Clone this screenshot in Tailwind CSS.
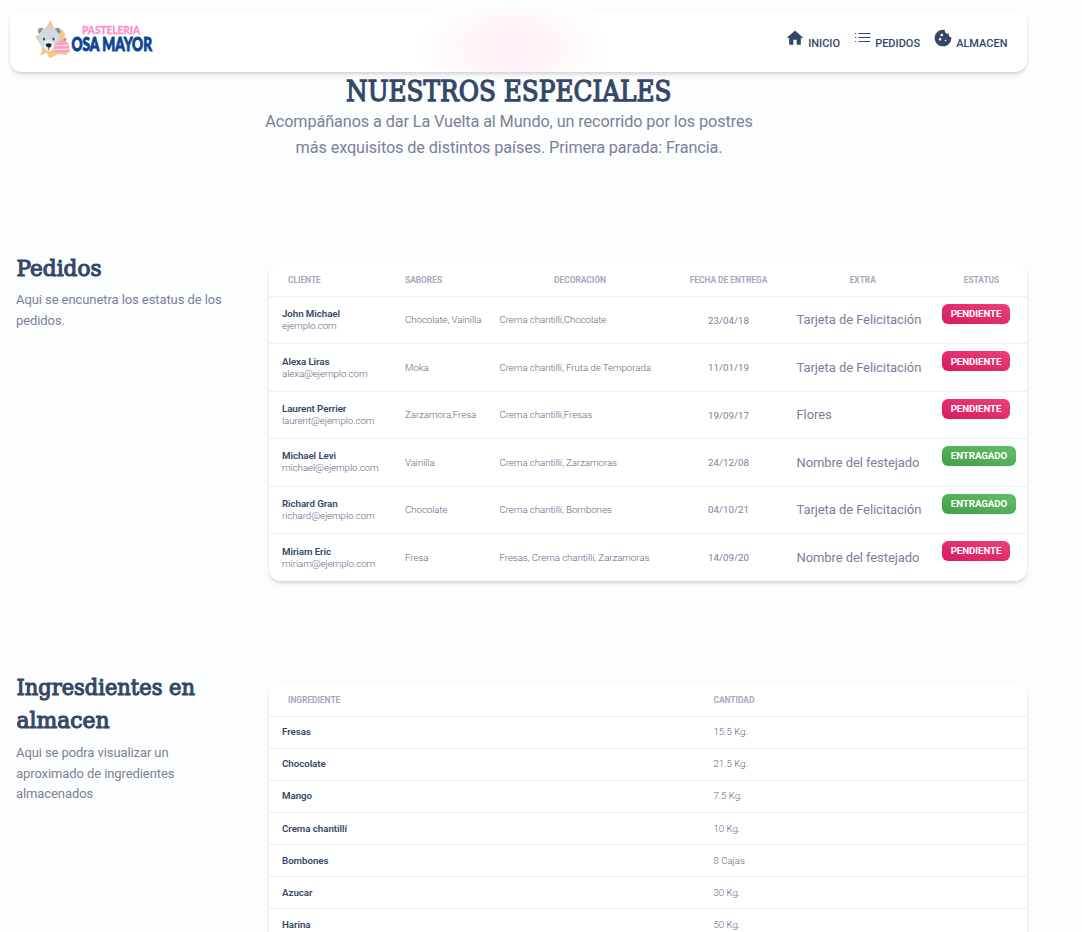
<!DOCTYPE html>
<html lang="es">
<head>
<meta charset="utf-8">
<title>Osa Mayor</title>
<script src="https://cdn.jsdelivr.net/npm/@tailwindcss/browser@4"></script>
</head>
<body class="h-[932px] overflow-hidden bg-[#fcfdfe] font-['Roboto',sans-serif] text-[#7b809a]">
<nav class="mx-[10px] mt-[10px] flex h-[62px] w-[1017px] justify-between rounded-xl bg-white bg-[radial-gradient(ellipse_98px_56px_at_503px_38px,#fff0f6_0%,#fff2f8_30%,#fffafc_65%,#ffffff_100%)] pl-[24px] pr-[19px] shadow-[0_3px_5px_-1px_rgba(0,0,0,0.16),0_1px_3px_rgba(0,0,0,0.05)]">
  <svg class="mt-[9px] h-[40px] w-[122px] overflow-visible" viewBox="34 19 122 40">
    <path d="M50.500 20l4 9.500 8 .5 3 5-3 6 5 14-9-1-9 4.500-3-6-6 3 2-9-7.500-10 7-2z" fill="#f5c58b"/>
    <circle cx="41" cy="31" r="3.200" fill="#8e9da6"/><circle cx="57.500" cy="31" r="3.200" fill="#8e9da6"/>
    <circle cx="41.300" cy="31.300" r="1.500" fill="#5f7480"/><circle cx="57.200" cy="31.300" r="1.500" fill="#5f7480"/>
    <ellipse cx="49" cy="38.500" rx="10.500" ry="11.500" fill="#cfdae0"/>
    <ellipse cx="49" cy="45.500" rx="5" ry="5.500" fill="#edf1f3"/>
    <ellipse cx="44" cy="39" rx="1" ry="1.600" fill="#35434c"/><ellipse cx="53.500" cy="39" rx="1" ry="1.600" fill="#35434c"/>
    <path d="M45.800 44q2.800-1.600 5.600 0 .4 3-2.300 3.600v2.500h-.6v-2.500q-3-.8-2.700-3.600z" fill="#182229"/>
    <path d="M54 45l9-6 6 5 .8 8.500-15 .3z" fill="#f7a3b8"/>
    <path d="M54 46l15.200-.8M54.500 49.500l15-.4" stroke="#fde0e4" stroke-width="1.200"/>
    <circle cx="65" cy="39.500" r="1.400" fill="#ec7898"/>
    <text x="82" y="34.300" textLength="58" lengthAdjust="spacingAndGlyphs" class="font-['Lato',sans-serif] text-[10.500px] font-black" fill="#fb93c9" stroke="#fb93c9" stroke-width=".3">PASTELERIA</text>
    <text x="71.500" y="50.700" textLength="80.500" lengthAdjust="spacingAndGlyphs" class="font-['Lato',sans-serif] text-[18px] font-black leading-none" fill="#0c4596" stroke="#0c4596" stroke-width=".9" stroke-linejoin="round">OSA MAYOR</text>
  </svg>
  <div class="flex pt-[18px] text-[11px] font-medium leading-[16px] text-[#344767]">
    <a class="flex w-[68px]"><svg class="mr-[3px] h-[20px] w-[20px]" viewBox="0 0 24 24" fill="currentColor"><path d="M10 20v-6h4v6h5v-8h3L12 3 2 12h3v8z"/></svg><span class="mt-[8px]">INICIO</span></a>
    <a class="flex w-[80px]"><svg class="mr-[2px] h-[20px] w-[20px]" viewBox="0 0 24 24" fill="currentColor"><path d="M2.500 6h1.300v1.300H2.500zM6.500 6h14.500v1.300h-14.500zM2.500 10.800h1.300v1.300H2.500zM6.500 10.800h14.500v1.300h-14.500zM2.500 15.600h1.300v1.300H2.500zM6.500 15.600h14.500v1.300h-14.500z"/></svg><span class="mt-[8px]">PEDIDOS</span></a>
    <a class="mr-[0.500px] flex"><svg class="mr-[3px] h-[20px] w-[20px]" viewBox="0 0 24 24" fill="currentColor"><path d="M21.950 10.990c-1.790-.03-3.700-1.950-2.680-4.220-2.980 1-5.770-1.590-5.190-4.560C6.950.71 2 6.580 2 12c0 5.520 4.480 10 10 10 5.890 0 10.540-5.080 9.950-11.010zM8.500 15c-.83 0-1.500-.67-1.500-1.500S7.670 12 8.500 12s1.500.67 1.500 1.500S9.330 15 8.500 15zm2-5C9.670 10 9 9.330 9 8.500S9.670 7 10.500 7s1.500.67 1.500 1.500-.67 1.500-1.500 1.500zm4.500 6c-.55 0-1-.45-1-1s.45-1 1-1 1 .45 1 1-.45 1-1 1z"/></svg><span class="mt-[8px]">ALMACEN</span></a>
  </div>
</nav>
<header class="w-[1017px] pt-[2px] text-center">
  <h1><svg class="mx-auto h-[35px] w-[327px] overflow-visible font-['Roboto_Slab','DejaVu_Serif',serif] text-[28px]" fill="#344767" stroke="#344767" stroke-width="1.300"><text x="1" y="26.500" textLength="325.500" lengthAdjust="spacingAndGlyphs">NUESTROS ESPECIALES</text></svg></h1>
  <p class="pl-px text-[16.250px] leading-[26px] tracking-[-0.11px]">Acompáñanos a dar La Vuelta al Mundo, un recorrido por los postres<br>más exquisitos de distintos países. Primera parada: Francia.</p>
</header>
<section class="mt-[90px] flex h-[420px]">
  <div class="w-[269px] pl-4">
    <h3><svg class="h-[33px] w-[87px] overflow-visible font-['Roboto_Slab','DejaVu_Serif',serif] text-[23px]" fill="#344767" stroke="#344767" stroke-width="1.150"><text x="0.500" y="25" textLength="85" lengthAdjust="spacingAndGlyphs">Pedidos</text></svg></h3>
    <p class="mt-[6px] text-[13px] leading-[20.800px] tracking-[-0.08px]">Aqui se encunetra los estatus de los<br>pedidos.</p>
  </div>
  <div class="mt-[12px] h-[318px] w-[758px] rounded-xl bg-white shadow-[0_3px_5px_-1px_rgba(0,0,0,0.14),0_1px_3px_rgba(0,0,0,0.06)]">
    <div class="grid h-[34px] grid-cols-[123px_94.500px_161px_136px_145.500px_85px] items-center border-b border-[#edeff2] pl-[13px] pt-[2px] text-[8.450px] font-bold tracking-[-0.05px] text-[#a7aabb]">
      <span class="pl-[6px]">CLIENTE</span><span>SABORES</span><span class="text-center">DECORACIÓN</span><span class="text-center">FECHA DE ENTREGA</span><span class="pr-[13px] text-center">EXTRA</span><span class="pr-[6px] text-center">ESTATUS</span>
    </div>
    <div id="orders"></div>
  </div>
</section>
<section class="flex">
  <div class="w-[269px] pl-4">
    <h3><svg class="h-[66px] w-[180px] overflow-visible font-['Roboto_Slab','DejaVu_Serif',serif] text-[23px]" fill="#344767" stroke="#344767" stroke-width="1.150"><text x="0.500" y="24" textLength="178.500" lengthAdjust="spacingAndGlyphs">Ingresdientes en</text><text x="0.500" y="57" textLength="93" lengthAdjust="spacingAndGlyphs">almacen</text></svg></h3>
    <p class="mt-[6px] text-[13px] leading-[20.500px] tracking-[-0.09px]">Aqui se podra visualizar un<br>aproximado de ingredientes<br>almacenados</p>
  </div>
  <div class="mt-[12px] h-[318px] w-[758px] rounded-xl bg-white shadow-[0_3px_5px_-1px_rgba(0,0,0,0.14),0_1px_3px_rgba(0,0,0,0.06)]">
    <div class="grid h-[33.500px] grid-cols-[431.500px_1fr] items-center border-b border-[#edeff2] pl-[13px] pt-[2px] text-[8.450px] font-bold tracking-[-0.05px] text-[#a7aabb]"><span class="pl-[6px]">INGREDIENTE</span><span>CANTIDAD</span></div>
    <div id="stock"></div>
  </div>
</section>
<script>
const orders = [
  ['John Michael','ejemplo.com','Chocolate, Vainilla','Crema chantillí,Chocolate','23/04/18','Tarjeta de Felicitación',0],
  ['Alexa Liras','alexa@ejemplo.com','Moka','Crema chantillí, Fruta de Temporada','11/01/19','Tarjeta de Felicitación',0],
  ['Laurent Perrier','laurent@ejemplo.com','Zarzamora,Fresa','Crema chantillí,Fresas','19/09/17','Flores',0],
  ['Michael Levi','michael@ejemplo.com','Vainilla','Crema chantillí, Zarzamoras','24/12/08','Nombre del festejado',1],
  ['Richard Gran','richard@ejemplo.com','Chocolate','Crema chantillí, Bombones','04/10/21','Tarjeta de Felicitación',1],
  ['Miriam Eric','miriam@ejemplo.com','Fresa','Fresas, Crema chantillí, Zarzamoras','14/09/20','Nombre del festejado',0]
];
document.getElementById('orders').innerHTML = orders.map(o => `
<div class="grid h-[47.400px] grid-cols-[123px_94.500px_161px_136px_145.500px_85px] items-center border-b border-[#edeff2] pl-[13px] text-[9.750px] font-light tracking-[-0.08px] text-[#61667f] last:border-b-0">
<div class="leading-[12px]"><div class="font-semibold text-[#344767]">${o[0]}</div><div>${o[1]}</div></div>
<span class="pt-px">${o[2]}</span><span class="pt-px">${o[3]}</span><span class="pt-[2px] text-center font-normal tracking-normal text-[#7b809a]">${o[4]}</span><span class="text-[13px] font-normal text-[#7b809a]">${o[5]}</span>
<div class="self-start pt-[7px]"><span class="${o[6] ? 'flex h-[20px] w-[74px] items-center justify-center rounded-[6px] bg-linear-[195deg,#66bb6a,#43a047] pt-px text-[9.750px] font-bold tracking-[-0.1px] text-white' : 'flex h-[20px] w-[68px] items-center justify-center rounded-[6px] bg-linear-[195deg,#ec407a,#d81b60] pt-px text-[9.750px] font-bold tracking-[-0.1px] text-white'}">${o[6] ? 'ENTRAGADO' : 'PENDIENTE'}</span></div>
</div>`).join('');
const stock = [['Fresas','15.5 Kg.'],['Chocolate','21.5 Kg.'],['Mango','7.5 Kg.'],['Crema chantillí','10 Kg.'],['Bombones','8 Cajas'],['Azucar','30 Kg.'],['Harina','50 Kg.']];
document.getElementById('stock').innerHTML = stock.map(s => `
<div class="grid h-[32.100px] grid-cols-[431.500px_1fr] items-center border-b border-[#edeff2] pl-[13px] pt-px text-[9.750px] tracking-[-0.06px]"><span class="font-semibold text-[#344767]">${s[0]}</span><span class="font-light text-[#61667f]">${s[1]}</span></div>`).join('');
</script>
</body>
</html>
